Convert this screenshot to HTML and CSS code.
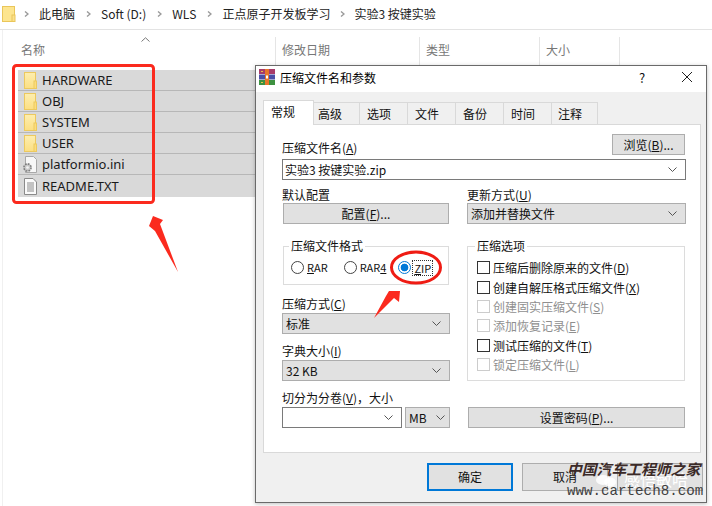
FILE: index.html
```html
<!DOCTYPE html>
<html lang="zh">
<head>
<meta charset="utf-8">
<title>压缩文件名和参数</title>
<link rel="stylesheet" href="styles.css">
</head>
<body>
<div class="screen">
  <div class="crumbs">
    <svg class="crumb-folder" width="14" height="16" viewBox="0 0 14 16"><rect x="0.5" y="0.5" width="12" height="15" fill="#fde58f" stroke="#eac65a"/><rect x="10" y="9" width="3" height="6.5" fill="#fbe08a" stroke="#eac65a"/></svg>
    <svg class="sep" width="5" height="6" viewBox="0 0 5 6"><path d="M1 .5 4 3 1 5.500" fill="none" stroke="#9a9a9a" stroke-width="1.400"/></svg>
    <span class="crumb">此电脑</span>
    <svg class="sep" width="5" height="6" viewBox="0 0 5 6"><path d="M1 .5 4 3 1 5.500" fill="none" stroke="#9a9a9a" stroke-width="1.400"/></svg>
    <span class="crumb">Soft (D:)</span>
    <svg class="sep" width="5" height="6" viewBox="0 0 5 6"><path d="M1 .5 4 3 1 5.500" fill="none" stroke="#9a9a9a" stroke-width="1.400"/></svg>
    <span class="crumb">WLS</span>
    <svg class="sep" width="5" height="6" viewBox="0 0 5 6"><path d="M1 .5 4 3 1 5.500" fill="none" stroke="#9a9a9a" stroke-width="1.400"/></svg>
    <span class="crumb crumb-tight">正点原子开发板学习</span>
    <svg class="sep" width="5" height="6" viewBox="0 0 5 6"><path d="M1 .5 4 3 1 5.500" fill="none" stroke="#9a9a9a" stroke-width="1.400"/></svg>
    <span class="crumb">实验3 按键实验</span>
  </div>

  <div class="explorer">
    <div class="cols">
      <div class="col col-name">名称
        <svg class="sort" width="9" height="5" viewBox="0 0 9 5"><path d="M.5 4.500 4.500 .8 8.500 4.500" fill="none" stroke="#777"/></svg>
      </div>
      <div class="col col-date">修改日期</div>
      <div class="col col-type">类型</div>
      <div class="col col-size">大小</div>
    </div>
    <div class="files">
      <div class="file"><svg class="ficon" width="13" height="17" viewBox="0 0 13 17"><defs><linearGradient id="fg" x1="0" y1="0" x2="0" y2="1"><stop offset="0" stop-color="#fdeeb0"/><stop offset="1" stop-color="#fcdf82"/></linearGradient></defs><rect x=".5" y=".5" width="11" height="16" fill="url(#fg)" stroke="#ecc95f"/><rect x="10" y="9" width="2.500" height="7.500" fill="#fcdc7c" stroke="#ecc95f"/></svg>HARDWARE</div>
      <div class="file"><svg class="ficon" width="13" height="17" viewBox="0 0 13 17"><rect x=".5" y=".5" width="11" height="16" fill="url(#fg)" stroke="#ecc95f"/><rect x="10" y="9" width="2.500" height="7.500" fill="#fcdc7c" stroke="#ecc95f"/></svg>OBJ</div>
      <div class="file"><svg class="ficon" width="13" height="17" viewBox="0 0 13 17"><rect x=".5" y=".5" width="11" height="16" fill="url(#fg)" stroke="#ecc95f"/><rect x="10" y="9" width="2.500" height="7.500" fill="#fcdc7c" stroke="#ecc95f"/></svg>SYSTEM</div>
      <div class="file"><svg class="ficon" width="13" height="17" viewBox="0 0 13 17"><rect x=".5" y=".5" width="11" height="16" fill="url(#fg)" stroke="#ecc95f"/><rect x="10" y="9" width="2.500" height="7.500" fill="#fcdc7c" stroke="#ecc95f"/></svg>USER</div>
      <div class="file"><svg class="ficon ficon-wide" width="15" height="17" viewBox="0 0 15 17"><path d="M3.500.5h8l3 3v13h-11z" fill="#f7f7f7" stroke="#a8a8a8"/><circle cx="5.500" cy="11.500" r="3.600" fill="#c9c9c9" stroke="#7f7f7f" stroke-width="1.600" stroke-dasharray="1.800 1"/><circle cx="5.500" cy="11.500" r="1.300" fill="#f4f4f4"/></svg>platformio.ini</div>
      <div class="file"><svg class="ficon" width="13" height="17" viewBox="0 0 13 17"><path d="M.5.500h8.500l3.500 3.500v12.500H.5z" fill="#fafafa" stroke="#8a8a8a"/><path d="M3 5h7M3 7h7M3 9h7M3 11h7M3 13h7" stroke="#8c8c8c"/></svg>README.TXT</div>
    </div>
  </div>

  <div class="dialog">
    <div class="titlebar">
      <svg class="rar" width="16" height="16" viewBox="0 0 16 16"><rect width="16" height="5" fill="#a83b6a"/><rect y="5.500" width="16" height="5" fill="#4a4fa8"/><rect y="11" width="16" height="5" fill="#3d9140"/><rect x="6" width="4" height="16" fill="#e8762a"/><rect x="2" y="2" width="2" height="1" fill="#e6c34a"/><rect x="2" y="13" width="2" height="1" fill="#e6c34a"/><rect x="7" y="6.500" width="2" height="3" fill="#fff"/></svg>
      <span class="title">压缩文件名和参数</span>
      <span class="help">?</span>
      <svg class="close" width="10" height="10" viewBox="0 0 10 10"><path d="M0 0 10 10M10 0 0 10" stroke="#222" fill="none"/></svg>
    </div>

    <div class="tabs">
      <div class="tab tab-active">常规</div>
      <div class="tab tab-narrow">高级</div>
      <div class="tab">选项</div>
      <div class="tab">文件</div>
      <div class="tab">备份</div>
      <div class="tab">时间</div>
      <div class="tab tab-last">注释</div>
    </div>

    <div class="page">
      <div class="name-row">
        <span class="label">压缩文件名(<u>A</u>)</span>
        <div class="btn btn-browse"><span>浏览(<u>B</u>)...</span></div>
      </div>
      <div class="combo combo-edit combo-name"><span>实验3 按键实验.zip</span>
        <svg width="9" height="5" viewBox="0 0 9 5"><path d="M.5.500 4.500 4.500 8.500.5" fill="none" stroke="#555"/></svg>
      </div>

      <div class="two-col two-col-a">
        <div>
          <div class="label label-block label-flush">默认配置</div>
          <div class="btn btn-config"><span>配置(<u>F</u>)...</span></div>
        </div>
        <div>
          <div class="label label-block label-flush">更新方式(<u>U</u>)</div>
          <div class="combo"><span>添加并替换文件</span>
            <svg width="9" height="5" viewBox="0 0 9 5"><path d="M.5.500 4.500 4.500 8.500.5" fill="none" stroke="#555"/></svg>
          </div>
        </div>
      </div>

      <div class="two-col two-col-b">
        <div>
          <div class="group group-format">
            <span class="legend">压缩文件格式</span>
            <div class="radio-row">
              <div class="radio"><i class="dot"></i><span><u>R</u>AR</span></div>
              <div class="radio"><i class="dot"></i><span>RAR<u>4</u></span></div>
              <div class="radio radio-on"><i class="dot"></i><span class="focus"><u>Z</u>IP</span></div>
            </div>
          </div>
          <div class="label label-block label-method">压缩方式(<u>C</u>)</div>
          <div class="combo"><span>标准</span>
            <svg width="9" height="5" viewBox="0 0 9 5"><path d="M.5.500 4.500 4.500 8.500.5" fill="none" stroke="#555"/></svg>
          </div>
          <div class="label label-block label-dict">字典大小(<u>I</u>)</div>
          <div class="combo"><span>32 KB</span>
            <svg width="9" height="5" viewBox="0 0 9 5"><path d="M.5.500 4.500 4.500 8.500.5" fill="none" stroke="#555"/></svg>
          </div>
        </div>
        <div class="group group-options">
          <span class="legend">压缩选项</span>
          <div class="check"><i class="box"></i><span>压缩后删除原来的文件(<u>D</u>)</span></div>
          <div class="check"><i class="box"></i><span>创建自解压格式压缩文件(<u>X</u>)</span></div>
          <div class="check check-off"><i class="box"></i><span>创建固实压缩文件(<u>S</u>)</span></div>
          <div class="check check-off"><i class="box"></i><span>添加恢复记录(<u>E</u>)</span></div>
          <div class="check"><i class="box"></i><span>测试压缩的文件(<u>T</u>)</span></div>
          <div class="check check-off"><i class="box"></i><span>锁定压缩文件(<u>L</u>)</span></div>
        </div>
      </div>

      <div class="two-col two-col-c">
        <div>
          <div class="label label-block">切分为分卷(<u>V</u>)，大小</div>
          <div class="split">
            <div class="combo combo-edit combo-size">
              <svg width="9" height="5" viewBox="0 0 9 5"><path d="M.5.500 4.500 4.500 8.500.5" fill="none" stroke="#555"/></svg>
            </div>
            <div class="combo combo-unit"><span>MB</span>
              <svg width="9" height="5" viewBox="0 0 9 5"><path d="M.5.500 4.500 4.500 8.500.5" fill="none" stroke="#555"/></svg>
            </div>
          </div>
        </div>
        <div class="pw-wrap"><div class="btn btn-password"><span>设置密码(<u>P</u>)...</span></div></div>
      </div>
    </div>

    <div class="footer">
      <div class="btn btn-foot btn-default">确定</div>
      <div class="btn btn-foot">取消</div>
      <div class="btn btn-foot"></div>
    </div>
  </div>

  <svg class="marks" width="712" height="506" viewBox="0 0 712 506">
    <rect x="13.500" y="65.500" width="140" height="137" rx="3" fill="none" stroke="#fb2a1e" stroke-width="3"/>
    <polygon points="153,216 163,220 160,224 178,272 155,231 149,226" fill="#fb2a1e"/>
    <ellipse cx="416" cy="267.500" rx="24.500" ry="15.500" fill="none" stroke="#ef1c14" stroke-width="3"/>
    <polygon points="400,291 399,302 394,298 374,318 386,296 389,291" fill="#fb2a1e"/>
  </svg>

  <div class="watermark">
    <div class="wm-ghost">感悟敏哈</div>
    <svg class="wm-chat" width="20" height="12" viewBox="0 0 20 12"><ellipse cx="7" cy="5" rx="7" ry="5" fill="#fff" opacity=".85"/><ellipse cx="14" cy="7" rx="6" ry="4.500" fill="#fff" opacity=".85"/></svg>
    <div class="wm-cn">中国汽车工程师之家</div>
    <div class="wm-url">www.cartech8.com</div>
  </div>
</div>
</body>
</html>
```

FILE: styles.css
```css
* { box-sizing: border-box; }
html, body { margin: 0; padding: 0; background: #fff; }
body { font: 12px/15px "Noto Sans CJK SC", "Noto Sans", sans-serif; color: #111; }
.screen { position: relative; width: 712px; height: 506px; overflow: hidden; background: #fff; }
u { text-decoration-thickness: 1px; text-underline-offset: 1px; }
i { display: block; font-style: normal; }

.crumbs { display: flex; align-items: center; height: 30px; padding: 0 0 2px 2px; border-bottom: 1px solid #e3e3e3; color: #222; }
.crumb { margin: 0 11px 0 10px; white-space: nowrap; }
.crumb-tight { margin-right: 9px; }
.crumb-folder { margin-right: 8px; flex: none; }
.sep { flex: none; }

.explorer { margin-left: 2px; border-left: 1px solid #f0f0f0; height: 476px; }
.cols { display: flex; height: 40px; padding-top: 7px; color: #777; }
.col { position: relative; height: 33px; padding: 5px 0 0 6px; border-right: 1px solid #e5e5e5; }
.col-name { width: 273px; padding-left: 18px; }
.col-date { width: 144px; }
.col-type { width: 120px; }
.col-size { width: 80px; }
.sort { position: absolute; left: 138px; top: 0; }

.files { margin-left: 15px; width: 300px; background: #d9d9d9; }
.file { display: flex; align-items: center; height: 21px; padding-left: 6px; border-bottom: 1px solid #b7b7b7; color: #1a1a1a; font-family: "Noto Sans", sans-serif; font-size: 13px; }
.file:last-child { border-bottom: 0; height: 22px; }
.ficon { flex: none; margin-right: 5px; }
.ficon-wide { margin-left: -2px; margin-right: 5px; }

.dialog { position: absolute; left: 255px; top: 65px; width: 452px; height: 438px; background: #f0f0f0; border: 1px solid #6a6a6a; box-shadow: 0 1px 4px rgba(0,0,0,.25); }
.titlebar { display: flex; align-items: center; height: 26px; background: #fff; padding: 0 0 4px 3px; }
.rar { flex: none; margin-right: 5px; }
.title { flex: 1; color: #000; }
.help { width: 18px; font-size: 13px; margin-right: 31px; text-align: center; }
.close { margin-right: 14px; }

.tabs { display: flex; align-items: flex-end; height: 32px; padding-left: 7px; }
.tab { width: 48px; height: 22px; line-height: 22px; padding-left: 7px; border: 1px solid #d9d9d9; border-width: 1px 1px 0 0; background: #f0f0f0; }
.tab-narrow { width: 46px; padding-left: 4px; }
.tab-last { width: 46px; padding-left: 6px; }
.tab-active { position: relative; width: 51px; height: 25px; margin-bottom: -1px; padding-left: 7px; line-height: 21px; background: #fff; border-width: 1px 1px 0 1px; z-index: 1; }

.page { width: 438px; height: 329px; margin-left: 7px; padding: 9px 14px 0 18px; background: #fff; border: 1px solid #d9d9d9; }
.name-row { display: flex; justify-content: space-between; align-items: flex-end; height: 21px; }
.label { display: block; color: #111; white-space: nowrap; }
.label-block { height: 15px; line-height: 13px; margin-bottom: 1px; }
.label-flush { margin-bottom: 0; }
.btn { display: flex; align-items: center; justify-content: center; height: 21px; padding-bottom: 1px; background: #e1e1e1; border: 1px solid #adadad; color: #111; white-space: nowrap; }
.btn-browse { width: 73px; margin-right: 1px; }
.btn-config { width: 166px; margin-left: 1px; }
.btn-password { width: 217px; margin-left: 1px; }
.combo { display: flex; align-items: center; justify-content: space-between; height: 21px; padding: 0 8px 1px 3px; background: #e1e1e1; border: 1px solid #adadad; white-space: nowrap; }
.combo-edit { background: #fff; border-color: #7a7a7a; }
.combo-name { margin-top: 4px; width: 404px; padding-left: 2px; }
.two-col { display: grid; grid-template-columns: 168px 219px; column-gap: 17px; }
.two-col-a { margin-top: 8px; }
.two-col-b { margin-top: 22px; }
.two-col-c { margin-top: 10px; }
.pw-wrap { align-self: end; }

.group { position: relative; border: 1px solid #dcdcdc; margin: 0 1px; }
.group-format { height: 39px; padding: 13px 0 0 7px; }
.group-options { height: 135px; width: 218px; padding: 11px 0 0 9px; margin: 0; }
.legend { position: absolute; left: 5px; top: -8px; padding: 0 2px; line-height: 13px; background: #fff; }
.group-options .legend { left: 7px; }
.radio-row { display: flex; font-size: 11px; }
.radio { display: flex; align-items: center; gap: 3px; margin-right: 16px; white-space: nowrap; }
.radio:nth-child(2) { margin-right: 12px; }
.dot { width: 13px; height: 13px; border: 1px solid #444; border-radius: 50%; background: #fff; }
.radio-on .dot { border-color: #0078d7; background: radial-gradient(circle, #0078d7 0, #0078d7 3.500px, #fff 4.200px); }
.radio-on { gap: 2px; }
.focus { outline: 1px dotted #333; line-height: 14px; padding: 0 1px; }

.check { display: flex; align-items: center; gap: 3px; height: 19.400px; white-space: nowrap; color: #111; }
.box { width: 13px; height: 13px; border: 1px solid #333; background: #fff; }
.check-off { color: #8f8f8f; }
.check-off .box { border-color: #ccc; }

.label-method { margin-top: 12px; }
.label-dict { margin-top: 10px; }
.split { display: flex; gap: 3px; }
.combo-size { width: 120px; justify-content: flex-end; }
.combo-unit { width: 45px; padding-right: 4px; background: #e1e1e1; }

.footer { display: flex; justify-content: flex-end; gap: 9px; padding: 10px 3px 0 0; }
.btn-foot { width: 86px; height: 28px; }
.btn-default { border: 2px solid #0078d7; }

.marks { position: absolute; left: 0; top: 0; pointer-events: none; }
.watermark { position: absolute; left: 566px; top: 458px; width: 140px; height: 42px; }
.wm-cn { position: absolute; left: 1px; top: 1px; width: 140px; font: italic 700 14.800px/19px "Noto Sans CJK SC", sans-serif; color: #3b2a28; white-space: nowrap; }
.wm-url { position: absolute; left: 1px; top: 25px; font: 14.200px/16px "Liberation Mono", monospace; color: #3f3f3f; white-space: nowrap; }
.wm-ghost { position: absolute; left: 58px; top: 11px; font-size: 16px; line-height: 20px; color: #fff; white-space: nowrap; }
.wm-chat { position: absolute; left: 30px; top: 17px; }
```
